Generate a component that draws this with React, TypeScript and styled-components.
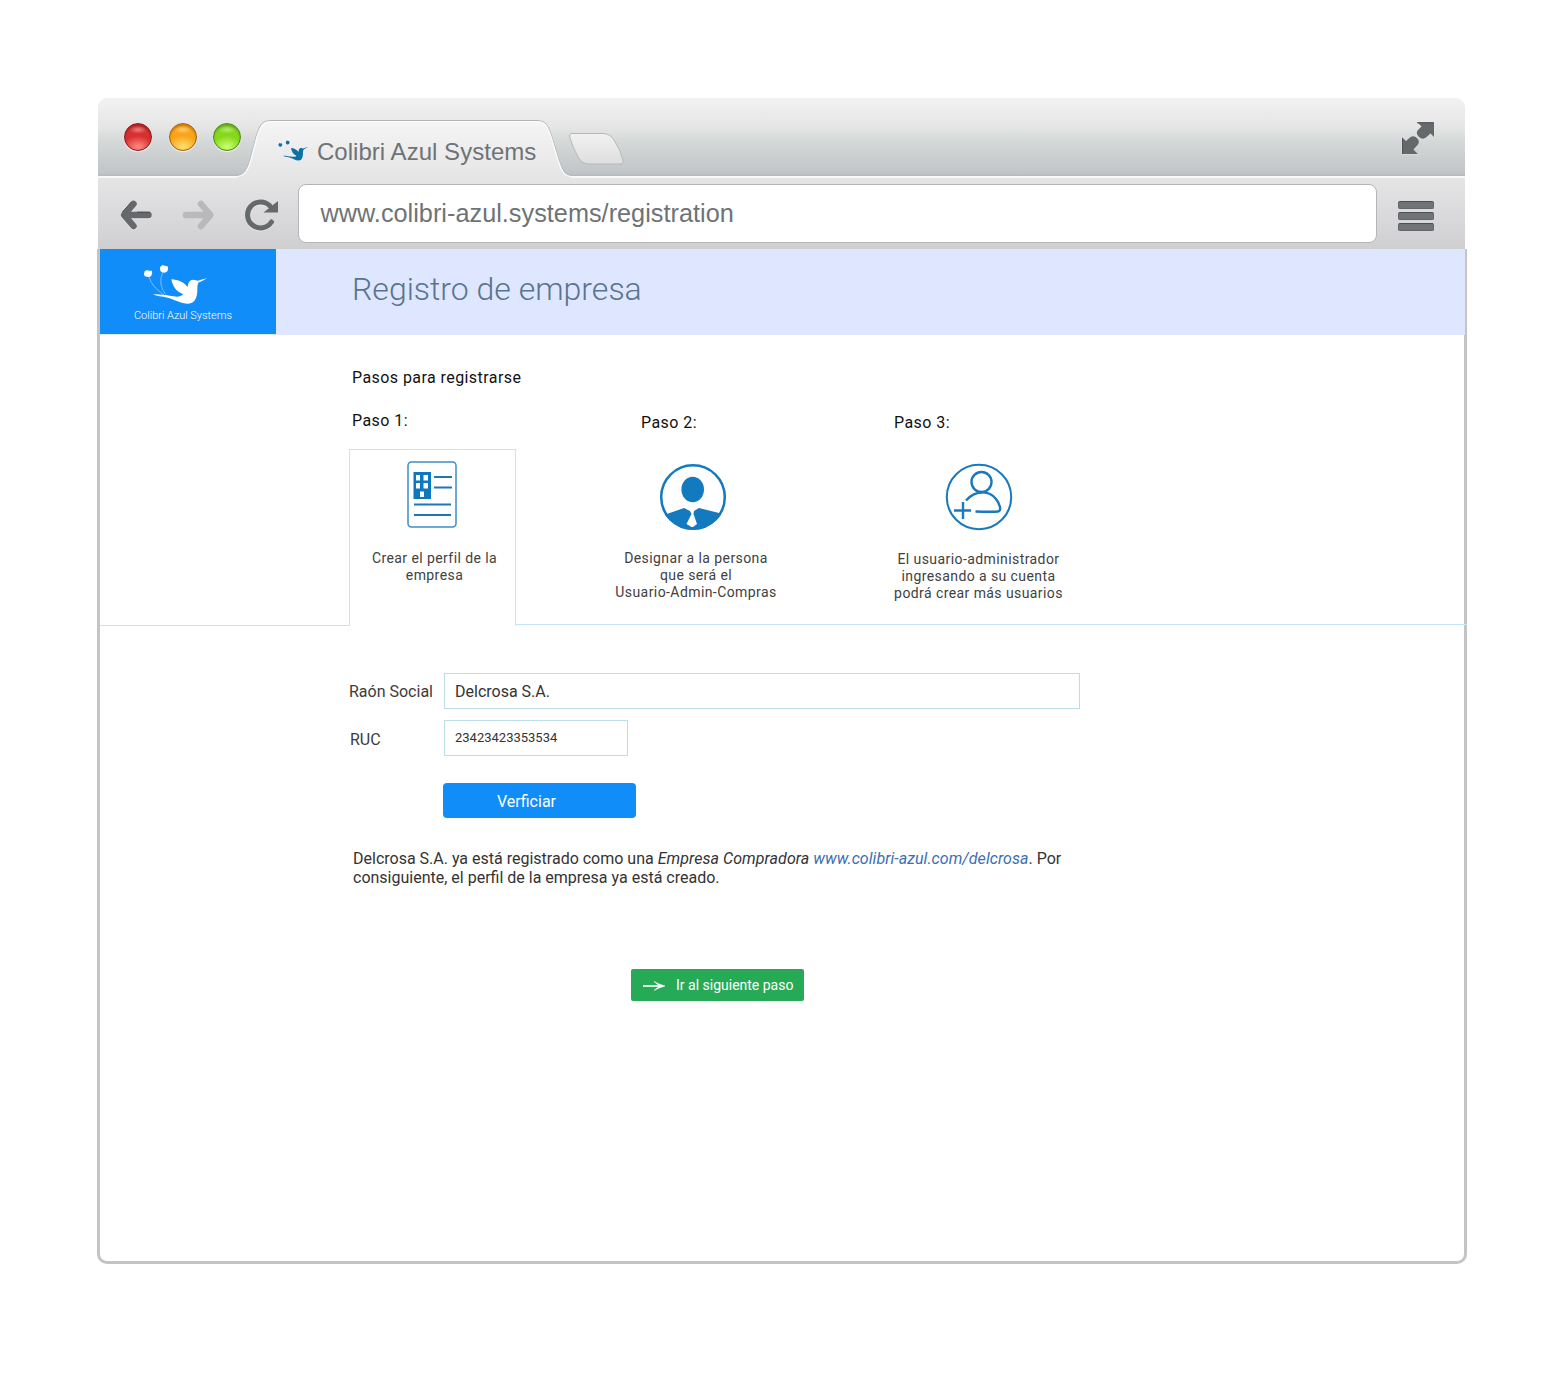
import React from "react";
import styled, { createGlobalStyle } from "styled-components";

const GlobalStyle = createGlobalStyle`
  * { box-sizing: border-box; }
  body { margin: 0; background: #fff; font-family: Roboto, "Open Sans", sans-serif; color: #333; }
  svg { display: block; flex: none; }
`;

const Stage = styled.div`
  width: 1565px;
  height: 1376px;
  padding: 98px 98px 0 97px;
`;

const Chrome = styled.div`
  width: 1367px;
  margin-left: 1px;
`;

const TitleBar = styled.div`
  height: 78px;
  display: flex;
  align-items: flex-start;
  padding-left: 26px;
  border-radius: 9px 9px 0 0;
  background: linear-gradient(#f2f2f2 0, #e6e6e6 28px, #d5d8d8 44px, #c0c4c6 76px, #b8bbbc 77px, #b8bbbc 78px);
`;

const Lights = styled.div`
  display: flex;
  width: 117px;
  justify-content: space-between;
  padding-top: 25px;
`;

const Light = styled.div<{ $edge: string; $mid: string; $glow: string }>`
  width: 28px;
  height: 28px;
  border-radius: 50%;
  border: 1.5px solid ${(p) => p.$edge};
  background:
    radial-gradient(ellipse 9px 4px at 50% 22%, rgba(255, 255, 255, 0.4), rgba(255, 255, 255, 0) 100%),
    radial-gradient(ellipse 15px 11px at 50% 88%, ${(p) => p.$glow}, ${(p) => p.$mid} 100%);
  box-shadow: inset 0 2px 2px ${(p) => p.$edge}99, 0 1px 1px rgba(255, 255, 255, 0.7);
`;

const Tab = styled.div`
  position: relative;
  width: 336px;
  height: 80px;
  margin-left: -5px;
  padding: 39px 0 0 42px;
  display: flex;
  align-items: flex-start;
`;

const TabShape = styled.svg`
  position: absolute;
  left: 0;
  top: 20px;
`;

const TabTitle = styled.span`
  position: relative;
  margin-left: 9px;
  font: 24px/30px "Liberation Sans", Arial, sans-serif;
  letter-spacing: 0.03px;
  color: #6e7375;
  white-space: nowrap;
`;

const Favicon = styled.span`
  position: relative;
  padding-top: 3px;
`;

const NewTab = styled.div`
  flex: 1;
  padding-top: 33px;
  margin-left: -5px;
`;

const Expand = styled.div`
  padding: 22px 29px 0 0;
`;

const ToolBar = styled.div`
  height: 73px;
  border-top: 2px solid #f8f8f8;
  display: flex;
  padding: 6px 31px 0 22px;
  background: linear-gradient(#e5e5e6, #cfcfd2);
`;

const NavIcons = styled.div`
  display: flex;
  align-items: center;
  width: 178px;
  height: 61px;
`;

const BackIcon = styled.svg`
  margin-left: -1px;
`;

const ForwardIcon = styled.svg`
  margin-left: 26px;
`;

const ReloadIcon = styled.svg`
  margin-left: 26px;
`;

const Address = styled.div`
  width: 1079px;
  height: 59px;
  margin-right: 21px;
  padding-left: 21.5px;
  border: 1px solid #b5b5b7;
  border-radius: 8px;
  background: #fff;
  font: 25.25px/57px "Liberation Sans", Arial, sans-serif;
  letter-spacing: 0.02px;
  color: #6e7375;
`;

const Menu = styled.div`
  display: flex;
  flex-direction: column;
  gap: 3px;
  padding-top: 17px;
`;

const MenuBar = styled.div`
  width: 36px;
  height: 8px;
  border-radius: 2px;
  background: #707476;
  border: 1px solid #636669;
  border-top-color: #4c5053;
`;

const Page = styled.div`
  width: 1370px;
  height: 1015px;
  border: 3px solid #c4c4c5;
  border-top: 0;
  border-radius: 0 0 10px 10px;
`;

const Header = styled.div`
  display: flex;
  width: 1365px;
  height: 86px;
  background: #dee7ff;
`;

const Logo = styled.div`
  width: 176px;
  height: 85px;
  padding: 15px 0 0 43px;
  background: #118dfa;
  display: flex;
  flex-direction: column;
`;

const LogoText = styled.span`
  margin: 4px 0 0 -9px;
  font-size: 11px;
  line-height: 14px;
  font-weight: 300;
  letter-spacing: -0.03px;
  color: #fff;
  white-space: nowrap;
`;

const Title = styled.h1`
  margin: 0 0 0 76px;
  font-size: 32px;
  line-height: 80px;
  font-weight: 300;
  color: #59748f;
`;

const Intro = styled.div`
  padding: 33px 0 0 252px;
  font-size: 16px;
  line-height: 20px;
  letter-spacing: 0.43px;
  color: #111;
`;

const StepNames = styled.div`
  display: flex;
  height: 61px;
  padding: 23px 0 0 252px;
`;

const StepName = styled.div<{ $w: number; $drop?: boolean }>`
  width: ${(p) => p.$w}px;
  padding-top: ${(p) => (p.$drop ? 2 : 0)}px;
  font-size: 16px;
  line-height: 20px;
  letter-spacing: 0.45px;
  color: #111;
`;

const Steps = styled.div`
  display: flex;
  height: 177px;
  width: 1367px;
`;

const Rule = styled.div`
  width: 249px;
  border-bottom: 1px solid #c6e4f7;
`;

const ActiveStep = styled.div`
  width: 167px;
  border: 1px solid #c6e4f7;
  border-bottom: 0;
  padding: 11px 1px 0 0;
  display: flex;
  flex-direction: column;
  align-items: center;
`;

const OtherSteps = styled.div`
  flex: 1;
  height: 176px;
  border-bottom: 1px solid #c6e4f7;
  display: flex;
  padding: 13.5px 0 0 89px;
`;

const Step = styled.div<{ $w: number }>`
  width: ${(p) => p.$w}px;
  display: flex;
  flex-direction: column;
  align-items: center;
`;

const PersonIcon = styled.svg`
  margin-left: -7px;
`;

const Caption = styled.div<{ $top: number; $shift?: number }>`
  margin-top: ${(p) => p.$top}px;
  padding-left: ${(p) => p.$shift ?? 0}px;
  font-size: 14px;
  line-height: 17px;
  letter-spacing: 0.42px;
  text-align: center;
  white-space: nowrap;
  color: #414141;
`;

const Form = styled.div`
  padding: 47px 0 0 249px;
`;

const Field = styled.label<{ $indent?: boolean }>`
  display: flex;
  align-items: center;
  height: 36px;
  margin-bottom: 11px;
  padding-left: ${(p) => (p.$indent ? 1 : 0)}px;
`;

const Label = styled.span<{ $w: number; $top?: number }>`
  width: ${(p) => p.$w}px;
  padding-top: ${(p) => p.$top ?? 0}px;
  font-size: 16px;
  white-space: nowrap;
  color: #3c3c3c;
`;

const Input = styled.input<{ $w: number; $size: number; $lift?: number }>`
  width: ${(p) => p.$w}px;
  height: 36px;
  padding: 0 10px ${(p) => p.$lift ?? 0}px;
  border: 1px solid #bddcea;
  outline: 0;
  font: ${(p) => p.$size}px Roboto, sans-serif;
  color: #333;
  background: #fff;
`;

const Verify = styled.button`
  display: block;
  width: 193px;
  height: 35px;
  margin: 27px 0 0 94px;
  padding: 1px 0 0 54px;
  border: 0;
  border-radius: 4px;
  background: #118dfa;
  color: #fff;
  font: 16px Roboto, sans-serif;
  text-align: left;
`;

const Notice = styled.p`
  margin: 31px 0 0 4px;
  font-size: 16px;
  line-height: 19px;
  white-space: nowrap;
  color: #333;
  em, a { letter-spacing: 0.06px; font-style: italic; }
  a { color: #3a6fb3; }
`;

const Next = styled.button`
  display: flex;
  align-items: center;
  gap: 11px;
  width: 173px;
  height: 32px;
  margin: 82px 0 0 282px;
  padding: 0 0 0 12px;
  border: 0;
  border-radius: 2px;
  background: #27aa56;
  color: #fff;
  font: 14px Roboto, sans-serif;
  white-space: nowrap;
`;

function Hummingbird({ width, height, color, stems }: { width: number; height: number; color: string; stems: number }) {
  return (
    <svg width={width} height={height} viewBox="158 74 196 122" preserveAspectRatio="none" fill={color}>
      <path d="M163 96L170 92L176 94L185 94Q187 102 183 109Q178 115 170 112Q161 112 161 103Z" />
      <path d="M210 82L217 77L223 79L232 81Q235 89 231 96Q225 103 215 99Q208 96 209 87Z" />
      <path d="M176 112Q183 142 222 167M217 99Q202 135 226 165" fill="none" stroke={color} strokeWidth="2.500" opacity={stems} />
      <path d="M352 115C340 123 332 126 326 129C320 135 322 145 321 155C320 175 314 192 294 193C270 193 254 180 232 175C214 171 200 171 188 165C214 165 236 169 250 171C262 173 272 172 279 165C262 158 249 148 243 120C262 121 283 129 292 144C293 130 298 121 309 121C316 121 319 124 323 124C332 121 342 119 352 115Z" />
    </svg>
  );
}

const metal = "#66696c";

export default function App() {
  return (
    <Stage>
      <GlobalStyle />
      <Chrome>
        <TitleBar>
          <Lights>
            <Light $edge="#8e1b1d" $mid="#d8302f" $glow="#ff8d83" />
            <Light $edge="#a96108" $mid="#f9a51a" $glow="#ffe070" />
            <Light $edge="#4f8a1c" $mid="#86d81c" $glow="#ccff72" />
          </Lights>
          <Tab>
            <TabShape width="336" height="60" viewBox="0 0 336 60">
              <defs>
                <linearGradient id="tab" x1="0" y1="0" x2="0" y2="1">
                  <stop offset="0" stopColor="#f5f5f5" />
                  <stop offset="1" stopColor="#e5e5e6" />
                </linearGradient>
              </defs>
              <path d="M0 58C9 58 11 51 14 42L20 19C24 7 26 3.500 36 3.500H300C310 3.500 311 7 315 19L322 42C326 53 328 58 336 58V60H0Z" fill="url(#tab)" />
              <path d="M0 57.500C9 57 11 51 14 42L20 19C24 6 26 2.500 36 2.500H300C310 2.500 312 7 316 19L323 42C327 53 329 57 336 57.500" fill="none" stroke="#b3b6b8" />
              <path d="M0 58.700C9 58 12 52 15 42L21 19C25 7 27 3.700 36 3.700H300C309 3.700 311 7 315 19L322 42C326 54 328 58 336 58.700" fill="none" stroke="#fafafa" strokeWidth="1.400" />
            </TabShape>
            <Favicon><Hummingbird width={30} height={21} color="#0b72a3" stems={0.08} /></Favicon>
            <TabTitle>Colibri Azul Systems</TabTitle>
          </Tab>
          <NewTab>
            <svg width="60" height="36" viewBox="0 0 60 36">
              <defs>
                <linearGradient id="plus" x1="0" y1="0" x2="0" y2="1">
                  <stop offset="0" stopColor="#f1f1f1" />
                  <stop offset="1" stopColor="#dededf" />
                </linearGradient>
              </defs>
              <path d="M5 2.500H36Q43 2.500 47 9Q53 18 56 29Q57 33 53 33H22Q15 33 11 26Q6 17 3 7Q2 2.500 5 2.500Z" fill="url(#plus)" stroke="#b5b8b9" />
            </svg>
          </NewTab>
          <Expand>
            <svg width="36" height="36" viewBox="0 0 36 36">
              <g stroke="#e4e6e6" strokeWidth="1" paintOrder="stroke" fill={metal}>
                <path d="M17.300 2.300H34V17L30.500 13.500L26 17.500Q22.500 20 19 17Q15.500 13.500 17.500 10.500L21.500 6.500Z" />
                <path d="M2 34V17.300L6 21L10.500 17Q14 14.800 17.500 18.500Q20 21.500 18 24.500L13.500 29.500L18 34Z" />
              </g>
              <path d="M17 2.800H33.500M2.500 18V34" stroke="#4f5254" />
            </svg>
          </Expand>
        </TitleBar>
        <ToolBar>
          <NavIcons>
            <BackIcon width="36" height="34" viewBox="0 0 36 34">
              <g fill="none" strokeWidth="6.500" strokeLinejoin="round" strokeLinecap="round">
                <path d="M14.500 6L5 17L14.500 28M6 17H29.500" transform="translate(0 1)" stroke="#e8e8e9" />
                <path d="M14.500 6L5 17L14.500 28M6 17H29.500" stroke={metal} />
              </g>
              <path d="M18 14.200H31M3.500 14L12.500 3.800" stroke="#4c4f51" fill="none" />
            </BackIcon>
            <ForwardIcon width="36" height="34" viewBox="0 0 36 34">
              <path d="M20 6L29.500 17L20 28M28 17H5" fill="none" stroke="#b9b9bb" strokeWidth="6.500" strokeLinejoin="round" strokeLinecap="round" />
            </ForwardIcon>
            <ReloadIcon width="38" height="36" viewBox="0 0 38 36">
              <path d="M28.500 25A13 13 0 1 1 27 9" transform="translate(0 1)" fill="none" stroke="#e8e8e9" strokeWidth="5" />
              <path d="M28.500 25A13 13 0 1 1 27 9" fill="none" stroke={metal} strokeWidth="5" strokeLinecap="round" />
              <path d="M35 4V15.500H20.500Z" fill={metal} />
            </ReloadIcon>
          </NavIcons>
          <Address>www.colibri-azul.systems/registration</Address>
          <Menu>
            <MenuBar />
            <MenuBar />
            <MenuBar />
          </Menu>
        </ToolBar>
      </Chrome>
      <Page>
        <Header>
          <Logo>
            <Hummingbird width={65.3} height={40.7} color="#fff" stems={0.5} />
            <LogoText>Colibri Azul Systems</LogoText>
          </Logo>
          <Title>Registro de empresa</Title>
        </Header>
        <Intro>Pasos para registrarse</Intro>
        <StepNames>
          <StepName $w={289}>Paso 1:</StepName>
          <StepName $w={253} $drop>Paso 2:</StepName>
          <StepName $w={200} $drop>Paso 3:</StepName>
        </StepNames>
        <Steps>
          <Rule />
          <ActiveStep>
            <svg width="50" height="68" viewBox="0 0 50 68">
              <rect x="1" y="1" width="48" height="65" rx="3.500" fill="#fff" stroke="#3d8fc6" strokeWidth="1.500" />
              <path fill="#0f77bd" fillRule="evenodd" d="M6.500 11H24V38H6.500ZM9 14V19.500H13V14ZM16.500 14V19.500H21V14ZM9 22V27.500H13V22ZM16.500 22V27.500H21V22ZM13 30.500V36H17V30.500Z" />
              <path d="M27 16H45M27 26.500H45M7 43.500H44M7 54H44" stroke="#1c77b5" strokeWidth="2" />
            </svg>
            <Caption $top={21} $shift={5}>Crear el perfil de la<br />empresa</Caption>
          </ActiveStep>
          <OtherSteps>
            <Step $w={182}>
              <PersonIcon width="68" height="68" viewBox="0 0 68 68">
                <clipPath id="disc"><circle cx="34" cy="34" r="33" /></clipPath>
                <circle cx="34" cy="34" r="31.800" fill="#fff" stroke="#137abf" strokeWidth="2.500" />
                <ellipse cx="33.700" cy="26.500" rx="11.300" ry="12.700" fill="#137abf" />
                <path clipPath="url(#disc)" d="M5 52L25 45L31 48L32.500 51L27.500 61L32.500 64H34L38 61L34.500 51L35 48L40 45L62 50.500V68H5Z" fill="#137abf" />
              </PersonIcon>
              <Caption $top={19.5}>Designar a la persona<br />que será el<br />Usuario-Admin-Compras</Caption>
            </Step>
            <Step $w={383}>
              <svg width="68" height="68" viewBox="0 0 68 68">
                <g fill="none" stroke="#1a79bb" strokeWidth="2">
                  <circle cx="34" cy="34" r="32.200" />
                  <circle cx="36.500" cy="19" r="10" strokeWidth="2.400" />
                  <path d="M21 37.500C30 27 44 27 51 36C55 41 57 48 53 48.500C46 49.300 38 48.500 30.500 48.500" strokeWidth="2.400" />
                  <path d="M9 47.500H26M18 39V56" strokeWidth="2.400" />
                </g>
              </svg>
              <Caption $top={20.5}>El usuario-administrador<br />ingresando a su cuenta<br />podrá crear más usuarios</Caption>
            </Step>
          </OtherSteps>
        </Steps>
        <Form>
          <Field>
            <Label $w={95}>Raón Social</Label>
            <Input $w={636} $size={16} defaultValue="Delcrosa S.A." />
          </Field>
          <Field $indent>
            <Label $w={94} $top={2}>RUC</Label>
            <Input $w={184} $size={13} $lift={1} defaultValue="23423423353534" />
          </Field>
          <Verify>Verficiar</Verify>
          <Notice>
            Delcrosa S.A. ya está registrado como una <em>Empresa Compradora</em> <a>www.colibri-azul.com/delcrosa</a>. Por<br />
            consiguiente, el perfil de la empresa ya está creado.
          </Notice>
          <Next>
            <svg width="22" height="12" viewBox="0 0 22 12">
              <path d="M0 7H20" stroke="#fff" strokeWidth="1.600" />
              <path d="M22 7Q15 9 11 11.500Q15 8.500 16 7Q15 5.500 11 2.500Q15 5 22 7Z" fill="#fff" stroke="#fff" strokeWidth=".5" />
            </svg>
            Ir al siguiente paso
          </Next>
        </Form>
      </Page>
    </Stage>
  );
}
